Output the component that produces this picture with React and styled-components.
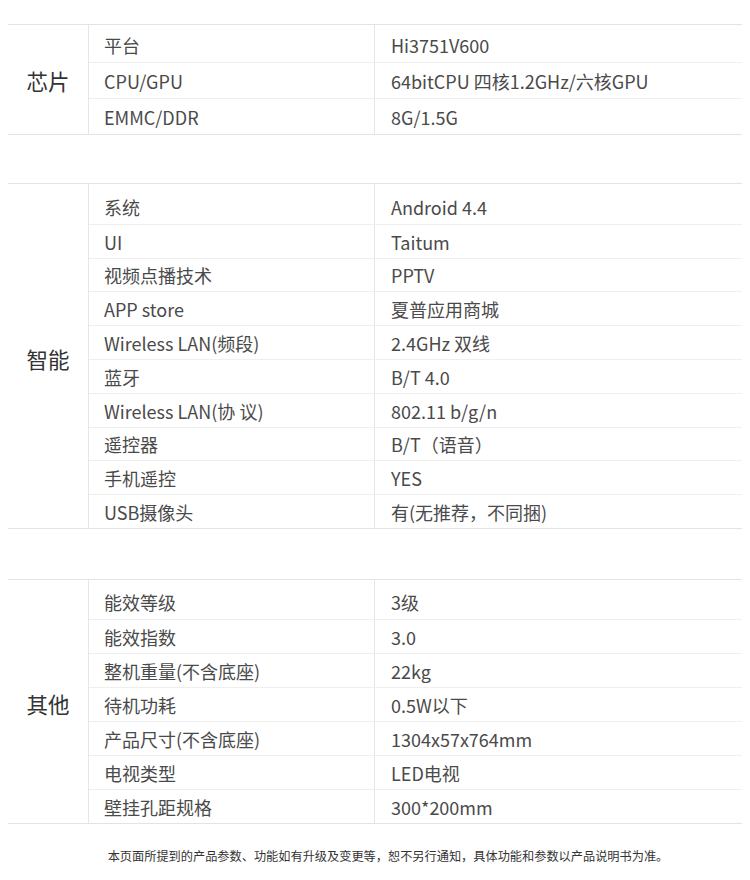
import styled, { createGlobalStyle } from 'styled-components';

const GlobalStyle = createGlobalStyle`
  body {
    margin: 8px;
    background: #fff;
    font-family: "Noto Sans CJK SC", "Noto Sans", sans-serif;
  }
`;

const sections = [
  {
    title: '芯片',
    rowHeight: 36,
    lead: 1,
    gap: 48,
    rows: [
      ['平台', 'Hi3751V600'],
      ['CPU/GPU', '64bitCPU 四核1.2GHz/六核GPU'],
      ['EMMC/DDR', '8G/1.5G'],
    ],
  },
  {
    title: '智能',
    rowHeight: 33.8,
    lead: 6,
    gap: 50,
    rows: [
      ['系统', 'Android 4.4'],
      ['UI', 'Taitum'],
      ['视频点播技术', 'PPTV'],
      ['APP store', '夏普应用商城'],
      ['Wireless LAN(频段)', '2.4GHz 双线'],
      ['蓝牙', 'B/T 4.0'],
      ['Wireless LAN(协 议)', '802.11 b/g/n'],
      ['遥控器', 'B/T（语音）'],
      ['手机遥控', 'YES'],
      ['USB摄像头', '有(无推荐，不同捆)'],
    ],
  },
  {
    title: '其他',
    rowHeight: 34,
    lead: 5,
    gap: 0,
    rows: [
      ['能效等级', '3级'],
      ['能效指数', '3.0'],
      ['整机重量(不含底座)', '22kg'],
      ['待机功耗', '0.5W以下'],
      ['产品尺寸(不含底座)', '1304x57x764mm'],
      ['电视类型', 'LED电视'],
      ['壁挂孔距规格', '300*200mm'],
    ],
  },
];

const Page = styled.div`
  padding-top: 16px;
  color: #4a4a4a;
`;

const Section = styled.section`
  display: flex;
  border-top: 1px solid #e3e3e3;
  border-bottom: 1px solid #e3e3e3;
  margin-bottom: ${(p) => p.$gap}px;
`;

const Title = styled.div`
  width: 80px;
  flex-shrink: 0;
  display: flex;
  align-items: center;
  justify-content: center;
  padding-top: ${(p) => p.$lead}px;
  border-right: 1px solid #e6e6e6;
  font-size: 21.5px;
  color: #333;
`;

const Rows = styled.div`
  flex: 1;
`;

const Row = styled.div`
  display: grid;
  grid-template-columns: 286px 1fr;
  height: ${(p) => p.$height + p.$lead}px;
  box-sizing: border-box;
  border-top: ${(p) => (p.$first ? 'none' : '1px solid #efefef')};
  font-size: 18px;
  line-height: 1;
`;

const Key = styled.div`
  display: flex;
  align-items: center;
  padding: ${(p) => p.$lead + 1}px 0 0 15px;
  border-right: 1px solid #e6e6e6;
`;

const Value = styled.div`
  display: flex;
  align-items: center;
  padding: ${(p) => p.$lead + 1}px 0 0 16px;
`;

const Note = styled.p`
  margin: 24px 0 0;
  padding-left: 26px;
  text-align: center;
  font-size: 12.2px;
  line-height: 16px;
  color: #333;
`;

const App = () => {
  return (
    <Page>
      <GlobalStyle />
      {sections.map((s) => (
        <Section key={s.title} $gap={s.gap}>
          <Title $lead={s.lead}>{s.title}</Title>
          <Rows>
            {s.rows.map(([k, v], i) => {
              const lead = i === 0 ? s.lead : 0;
              return (
                <Row key={k} $height={s.rowHeight} $lead={lead} $first={i === 0}>
                  <Key $lead={lead}>{k}</Key>
                  <Value $lead={lead}>{v}</Value>
                </Row>
              );
            })}
          </Rows>
        </Section>
      ))}
      <Note>本页面所提到的产品参数、功能如有升级及变更等，恕不另行通知，具体功能和参数以产品说明书为准。</Note>
    </Page>
  );
};

export default App;
